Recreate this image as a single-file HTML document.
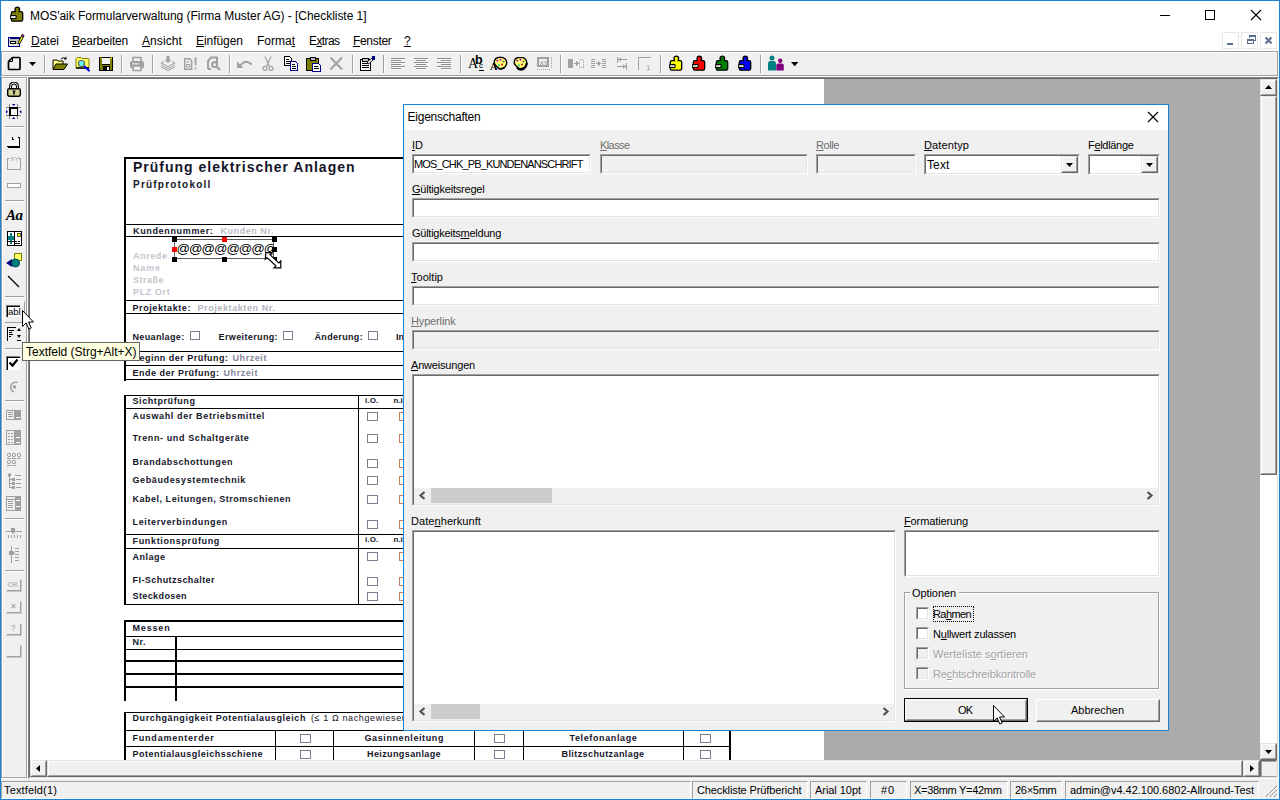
<!DOCTYPE html>
<html lang="de">
<head>
<meta charset="utf-8">
<title>MOS'aik Formularverwaltung</title>
<style>
*{box-sizing:border-box;margin:0;padding:0}
html,body{width:1280px;height:800px;overflow:hidden;background:#fff}
body{position:relative;font-family:"Liberation Sans",sans-serif;font-size:12px;color:#000}
.a{position:absolute}
.t{position:absolute;white-space:nowrap;line-height:1}
u{text-decoration:underline;text-underline-offset:1px}
#win{left:0;top:0;width:1280px;height:800px;border:1px solid #1883d7;background:#fff}
/* title */
/* menu */
/* toolbar */
#tb{left:1px;top:51px;width:1278px;height:26px;background:#f0f0f0;border-top:1px solid #d9d9d9}
.sep{position:absolute;top:57px;width:2px;height:18px;border-left:1px solid #a0a0a0;border-right:1px solid #fff}
/* left toolbar */
#ltb{left:1px;top:77px;width:27px;height:702px;background:#f0f0f0}
.hsep{position:absolute;left:5px;width:19px;height:2px;border-top:1px solid #a0a0a0;border-bottom:1px solid #fff}
/* mdi */
#mdi{left:28px;top:77px;width:1251px;height:702px;background:#ababab;border:1px solid #828282;border-right-color:#fff;border-bottom-color:#fff}
#mdi2{left:0;top:0;width:1249px;height:700px;border:1px solid #696969;border-right-color:#e3e3e3;border-bottom-color:#e3e3e3}
#page{left:30px;top:79px;width:794px;height:681px;background:#fff;overflow:hidden}
/* scrollbars */
.sb{background:#f0f0f0}
/* status */
#status{left:1px;top:779px;width:1278px;height:20px;background:#f0f0f0}
.sp{position:absolute;top:780px;height:18px;border:1px solid #a0a0a0;border-right-color:#fff;border-bottom-color:#fff}
.st{top:783px;font-size:12px}
/* dialog */
#dlg{left:403px;top:104px;width:766px;height:627px;border:1px solid #1883d7;background:#f0f0f0}
#dlgt{left:0;top:0;width:764px;height:25px;background:#fff}
.lb{font-size:11px}
.dis{color:#6d6d6d}
.in{position:absolute;background:#fff;border:1px solid #a0a0a0;border-right-color:#fff;border-bottom-color:#fff}
.in>i{position:absolute;left:0;top:0;right:0;bottom:0;border:1px solid #696969;border-right-color:#e3e3e3;border-bottom-color:#e3e3e3}
.in.d{background:#f0f0f0}
.btn{position:absolute;background:#e1e1e1;border:1px solid #adadad;font-size:11px;text-align:center}
.cb{position:absolute;width:13px;height:13px;background:#fff;border:1px solid #a0a0a0;border-right-color:#fff;border-bottom-color:#fff}
.cb>i{position:absolute;left:0;top:0;right:0;bottom:0;border:1px solid #696969;border-right-color:#e3e3e3;border-bottom-color:#e3e3e3}
/* doc */
.dt{position:absolute;white-space:nowrap;line-height:1;font-size:8.5px;font-weight:bold;color:#1a1a2a}
.dg{color:#b9b9c0}
.ln{position:absolute;background:#000}
.dcb{position:absolute;width:10px;height:9px;border:1px solid #8a8a9a;background:#fff}
</style>
</head>
<body>
<div id="win" class="a"></div>

<div class="t" style="left:30px;top:10.05px;font-size:12px;letter-spacing:-0.042px;">MOS'aik Formularverwaltung (Firma Muster AG) - [Checkliste 1]</div>
<svg class="a" style="left:1140px;top:1px;" width="139" height="29" viewBox="0 0 139 29"><g stroke="#000" stroke-width="1" fill="none" shape-rendering="crispEdges"><path d="M20 14.5h10"/><rect x="65.500" y="9.500" width="9" height="9"/></g>
<path d="M111 9l10 10M121 9l-10 10" stroke="#000" stroke-width="1.100" fill="none"/></svg>
<svg class="a" style="left:8px;top:33px;" width="17" height="15" viewBox="0 0 17 15"><g shape-rendering="crispEdges"><rect x="0" y="4" width="12" height="10" fill="#000080"/><rect x="1" y="6" width="10" height="7" fill="#c0c0c0"/><rect x="1" y="11" width="10" height="2" fill="#e8e8e8"/><rect x="1" y="5" width="1" height="1" fill="#fff"/><rect x="2" y="8" width="6" height="3" fill="#000"/><rect x="3" y="9" width="4" height="1" fill="#fff"/></g>
<path d="M10.300 9.500l3.200-6.500 1.800 1-3.200 6.300-2.200.6z" fill="#ffff00" stroke="#000" stroke-width=".9"/><path d="M13.500 3l.8-1.700 1.900 1-.9 1.700z" fill="#a000a0" stroke="#000" stroke-width=".6"/></svg>
<div class="t" style="left:31px;top:35.05px;font-size:12px;letter-spacing:-0.006px;"><u>D</u>atei</div>
<div class="t" style="left:72px;top:35.05px;font-size:12px;letter-spacing:-0.206px;"><u>B</u>earbeiten</div>
<div class="t" style="left:142px;top:35.05px;font-size:12px;letter-spacing:0.089px;"><u>A</u>nsicht</div>
<div class="t" style="left:196px;top:35.05px;font-size:12px;letter-spacing:-0.049px;"><u>E</u>infügen</div>
<div class="t" style="left:257px;top:35.05px;font-size:12px;">Forma<u>t</u></div>
<div class="t" style="left:309px;top:35.05px;font-size:12px;letter-spacing:-0.589px;">E<u>x</u>tras</div>
<div class="t" style="left:353px;top:35.05px;font-size:12px;letter-spacing:-0.315px;"><u>F</u>enster</div>
<div class="t" style="left:404px;top:35.05px;font-size:12px;"><u>?</u></div>
<div class="a" style="left:1222px;top:32px;width:17px;height:17px;background:#fff;border:1px solid #e8e8e8;"></div>
<div class="a" style="left:1241px;top:32px;width:17px;height:17px;background:#fff;border:1px solid #e8e8e8;"></div>
<div class="a" style="left:1260px;top:32px;width:17px;height:17px;background:#fff;border:1px solid #e8e8e8;"></div>
<svg class="a" style="left:1222px;top:32px;" width="55" height="17" viewBox="0 0 55 17"><g fill="none" stroke="#5c6f8c" shape-rendering="crispEdges"><path d="M5 12h6" stroke-width="2"/>
<path d="M27.500 6v-2.500h6v5h-2" stroke-width="1"/><path d="M27 3.500h7" stroke-width="2"/><rect x="25.500" y="7.500" width="6" height="4" stroke-width="1"/><path d="M25 7.500h7" stroke-width="2"/></g>
<path d="M43.500 5.500l6 6M49.500 5.500l-6 6" stroke="#5c6f8c" stroke-width="2" fill="none"/></svg>
<svg class="a" style="left:10px;top:6px;" width="14" height="16" viewBox="0 0 14 16"><rect x="1.300" y="5.600" width="11.400" height="9.600" rx="1.600" fill="#808000" stroke="#000" stroke-width="1.300"/><circle cx="7.300" cy="3.400" r="2.300" fill="#808000" stroke="#000" stroke-width="1.300"/><rect x="6" y="4.300" width="2.600" height="2.600" fill="#808000"/>
<rect x=".7" y="9.700" width="3.500" height="2.800" fill="#fff" stroke="#000" stroke-width="1.100"/><circle cx="4.600" cy="11.100" r="1.700" fill="#fff" stroke="#000" stroke-width="1.100"/><rect x="1.300" y="10.300" width="3" height="1.600" fill="#fff"/></svg>

<!-- TOOLBAR -->
<div id="tb" class="a"></div>
<div class="a" style="left:1px;top:51px;width:1277px;height:1px;background:#a0a0a0;"></div>
<div class="a" style="left:2px;top:52px;width:1275px;height:1px;background:#fff;"></div>
<div class="a" style="left:1px;top:51px;width:1px;height:25px;background:#a0a0a0;"></div>
<div class="a" style="left:2px;top:52px;width:1px;height:23px;background:#fff;"></div>
<div class="a" style="left:1px;top:75px;width:1277px;height:1px;background:#a0a0a0;"></div>
<div class="a" style="left:1px;top:76px;width:1278px;height:1px;background:#fff;"></div>
<div class="a" style="left:1277px;top:51px;width:1px;height:25px;background:#a0a0a0;"></div>
<div class="a" style="left:1278px;top:51px;width:1px;height:26px;background:#fff;"></div>
<div class="a" style="left:44px;top:55px;width:1px;height:18px;background:#a0a0a0;"></div>
<div class="a" style="left:45px;top:55px;width:1px;height:18px;background:#fff;"></div>
<div class="a" style="left:121px;top:55px;width:1px;height:18px;background:#a0a0a0;"></div>
<div class="a" style="left:122px;top:55px;width:1px;height:18px;background:#fff;"></div>
<div class="a" style="left:152px;top:55px;width:1px;height:18px;background:#a0a0a0;"></div>
<div class="a" style="left:153px;top:55px;width:1px;height:18px;background:#fff;"></div>
<div class="a" style="left:229px;top:55px;width:1px;height:18px;background:#a0a0a0;"></div>
<div class="a" style="left:230px;top:55px;width:1px;height:18px;background:#fff;"></div>
<div class="a" style="left:352px;top:55px;width:1px;height:18px;background:#a0a0a0;"></div>
<div class="a" style="left:353px;top:55px;width:1px;height:18px;background:#fff;"></div>
<div class="a" style="left:383px;top:55px;width:1px;height:18px;background:#a0a0a0;"></div>
<div class="a" style="left:384px;top:55px;width:1px;height:18px;background:#fff;"></div>
<div class="a" style="left:460px;top:55px;width:1px;height:18px;background:#a0a0a0;"></div>
<div class="a" style="left:461px;top:55px;width:1px;height:18px;background:#fff;"></div>
<div class="a" style="left:560px;top:55px;width:1px;height:18px;background:#a0a0a0;"></div>
<div class="a" style="left:561px;top:55px;width:1px;height:18px;background:#fff;"></div>
<div class="a" style="left:660px;top:55px;width:1px;height:18px;background:#a0a0a0;"></div>
<div class="a" style="left:661px;top:55px;width:1px;height:18px;background:#fff;"></div>
<div class="a" style="left:760px;top:55px;width:1px;height:18px;background:#a0a0a0;"></div>
<div class="a" style="left:761px;top:55px;width:1px;height:18px;background:#fff;"></div>
<svg class="a" style="left:7px;top:56px;" width="16" height="16" viewBox="0 0 16 16"><path d="M5.500 1.500h6.500q1 0 1 1v10q0 1-1 1h-9.500q-1 0-1-1v-7z" fill="none" stroke="#000" stroke-width="1.700"/><path d="M1.500 5.500h4v-4" fill="none" stroke="#000" stroke-width="1"/></svg>
<svg class="a" style="left:29px;top:62px;" width="8" height="5" viewBox="0 0 8 5"><path d="M0 0h7l-3.500 4z" fill="#000"/></svg>
<svg class="a" style="left:52px;top:56px;" width="16" height="16" viewBox="0 0 16 16"><path d="M1 13V4h4l1 1h5v3" fill="#ffff80" stroke="#000" stroke-width="1"/><path d="M1 13.500l3-5.500h11.500l-3.500 5.500z" fill="#808000" stroke="#000" stroke-width="1"/>
<path d="M9 3q2-2.500 5-.5" fill="none" stroke="#000" stroke-width="1"/><path d="M14.500 .5v3h-3z" fill="#000"/></svg>
<svg class="a" style="left:75px;top:56px;" width="16" height="16" viewBox="0 0 16 16"><path d="M1 12V2.500l1-1h4l1 1h6.500l.5.500V12z" fill="#ffff66" stroke="#808000" stroke-width="1"/><path d="M1 12h13" stroke="#000" stroke-width="1.500"/>
<circle cx="6.500" cy="7.500" r="3" fill="#66ffff" stroke="#606060" stroke-width="1.200"/><path d="M9 10l5.500 5" stroke="#0000ff" stroke-width="2.200"/><path d="M9.500 10.800l5 4.600" stroke="#000080" stroke-width=".7"/></svg>
<svg class="a" style="left:98px;top:56px;" width="16" height="16" viewBox="0 0 16 16"><g shape-rendering="crispEdges"><rect x="1" y="1" width="14" height="14" fill="#000"/><rect x="2" y="1" width="2" height="13" fill="#808000"/><rect x="12" y="1" width="2" height="13" fill="#808000"/><rect x="2" y="9" width="12" height="5" fill="#808000"/>
<rect x="4" y="2" width="8" height="6" fill="#f4f4f4"/><rect x="5" y="10" width="7" height="4" fill="#000"/><rect x="9" y="11" width="2" height="3" fill="#fff"/><rect x="13" y="2" width="1" height="1" fill="#ffff00"/></g></svg>
<svg class="a" style="left:129px;top:56px;" width="16" height="16" viewBox="0 0 16 16"><path d="M4 6V1.500h8V6" fill="#f0f0f0" stroke="#a0a0a0" stroke-width="1.600"/><rect x="1.500" y="5.500" width="13" height="6.500" rx="1.500" fill="#a0a0a0" stroke="#a0a0a0" stroke-width="1"/><rect x="3" y="7" width="7" height="1.500" fill="#d8d8d8"/><path d="M4 10v4.500h8V10z" fill="#f4f4f4" stroke="#a0a0a0" stroke-width="1.600"/></svg>
<svg class="a" style="left:160px;top:56px;" width="16" height="16" viewBox="0 0 16 16"><g fill="none" stroke="#a0a0a0" stroke-width="1"><path d="M1 9l7 3.500 7-3.500M1 11l7 3.500 7-3.500M1 7l7 3.500 7-3.500-3-1.500M4 5.500L1 7"/></g><path d="M6.500 0h3v3.500h2L8 7 4.500 3.500h2z" fill="#a0a0a0"/></svg>
<svg class="a" style="left:183px;top:56px;" width="16" height="16" viewBox="0 0 16 16"><g fill="none" stroke="#a0a0a0" stroke-width="1.400"><path d="M1.700 2.700h5l2 2v8.600h-7z"/><path d="M3.500 8.500h3.500v2.500h-3.500z" stroke-width="1"/><path d="M3.500 6h3" stroke-width="1"/></g><path d="M11.500 1.500h2.200l-.4 8h-1.400z" fill="#a0a0a0"/><rect x="11.700" y="11.500" width="1.800" height="1.800" fill="#a0a0a0"/></svg>
<svg class="a" style="left:206px;top:56px;" width="16" height="16" viewBox="0 0 16 16"><path d="M2 13V5l3-3.500h6V7" fill="none" stroke="#a0a0a0" stroke-width="2"/><circle cx="8.500" cy="8.500" r="2.500" fill="none" stroke="#a0a0a0" stroke-width="2"/><path d="M10.500 10.500l3.500 3.500" stroke="#a0a0a0" stroke-width="2.400"/><path d="M2 13h3" stroke="#a0a0a0" stroke-width="2"/></svg>
<svg class="a" style="left:236px;top:56px;" width="16" height="16" viewBox="0 0 16 16"><path d="M4.500 9.500Q9 2.500 16 8.500" fill="none" stroke="#a0a0a0" stroke-width="1.800"/><path d="M1 5.500v6.500h6.500z" fill="#a0a0a0"/></svg>
<svg class="a" style="left:260px;top:56px;" width="16" height="16" viewBox="0 0 16 16"><g fill="none" stroke="#a0a0a0" stroke-width="1.200"><path d="M5 0.500l4.500 10M11 0.500L6.500 10.500"/><circle cx="5" cy="12.300" r="2"/><circle cx="11" cy="12.300" r="2"/></g></svg>
<svg class="a" style="left:283px;top:56px;" width="16" height="16" viewBox="0 0 16 16"><g shape-rendering="crispEdges"><path d="M1.500 .5h5l2 2v7h-7z" fill="#fff" stroke="#000" stroke-width="1"/><path d="M3 3.500h3M3 5.500h4M3 7.500h4" stroke="#000"/>
<path d="M7.500 5.500h5l2 2v7h-7z" fill="#fff" stroke="#000080" stroke-width="1"/><path d="M9 8.500h3M9 10.500h4M9 12.500h4" stroke="#000"/></g></svg>
<svg class="a" style="left:306px;top:56px;" width="16" height="16" viewBox="0 0 16 16"><g shape-rendering="crispEdges"><rect x=".5" y="2.500" width="12" height="12" fill="#808000" stroke="#000"/><rect x="4" y="1" width="5" height="3" fill="#c0c0c0" stroke="#000"/>
<path d="M6.500 7.500h6l2 2v6h-8z" fill="#fff" stroke="#000080"/><path d="M8 10.500h4M8 12.500h5" stroke="#000"/></g></svg>
<svg class="a" style="left:328px;top:56px;" width="16" height="16" viewBox="0 0 16 16"><path d="M2.500 1.500l11.500 12M14 1.500l-11.500 12" fill="none" stroke="#a0a0a0" stroke-width="2"/></svg>
<svg class="a" style="left:359px;top:56px;" width="16" height="16" viewBox="0 0 16 16"><g shape-rendering="crispEdges"><rect x="1.500" y="3.500" width="10" height="11" fill="#fff" stroke="#000"/><path d="M3 7.500h7M3 9.500h7M3 11.500h7" stroke="#000"/><rect x="3" y="2" width="6" height="3" fill="#c0c0c0" stroke="#000"/></g>
<path d="M8 6l5-4 1.500 1.500-5 4.500z" fill="#fff" stroke="#000" stroke-width=".9"/><rect x="13" y="0" width="3.500" height="4" fill="#000080"/></svg>
<svg class="a" style="left:390px;top:56px;" width="16" height="16" viewBox="0 0 16 16"><g shape-rendering="crispEdges"><rect x="1" y="2" width="14" height="1" fill="#8c8c8c"/><rect x="2" y="3" width="14" height="1" fill="#fafafa"/><rect x="1" y="4" width="10" height="1" fill="#8c8c8c"/><rect x="2" y="5" width="10" height="1" fill="#fafafa"/><rect x="1" y="6" width="14" height="1" fill="#8c8c8c"/><rect x="2" y="7" width="14" height="1" fill="#fafafa"/><rect x="1" y="8" width="10" height="1" fill="#8c8c8c"/><rect x="2" y="9" width="10" height="1" fill="#fafafa"/><rect x="1" y="10" width="14" height="1" fill="#8c8c8c"/><rect x="2" y="11" width="14" height="1" fill="#fafafa"/><rect x="1" y="12" width="10" height="1" fill="#8c8c8c"/><rect x="2" y="13" width="10" height="1" fill="#fafafa"/></g></svg>
<svg class="a" style="left:413px;top:56px;" width="16" height="16" viewBox="0 0 16 16"><g shape-rendering="crispEdges"><rect x="1.0" y="2" width="14" height="1" fill="#8c8c8c"/><rect x="2.0" y="3" width="14" height="1" fill="#fafafa"/><rect x="3.0" y="4" width="10" height="1" fill="#8c8c8c"/><rect x="4.0" y="5" width="10" height="1" fill="#fafafa"/><rect x="1.0" y="6" width="14" height="1" fill="#8c8c8c"/><rect x="2.0" y="7" width="14" height="1" fill="#fafafa"/><rect x="3.0" y="8" width="10" height="1" fill="#8c8c8c"/><rect x="4.0" y="9" width="10" height="1" fill="#fafafa"/><rect x="1.0" y="10" width="14" height="1" fill="#8c8c8c"/><rect x="2.0" y="11" width="14" height="1" fill="#fafafa"/><rect x="3.0" y="12" width="10" height="1" fill="#8c8c8c"/><rect x="4.0" y="13" width="10" height="1" fill="#fafafa"/></g></svg>
<svg class="a" style="left:436px;top:56px;" width="16" height="16" viewBox="0 0 16 16"><g shape-rendering="crispEdges"><rect x="1" y="2" width="14" height="1" fill="#8c8c8c"/><rect x="2" y="3" width="14" height="1" fill="#fafafa"/><rect x="5" y="4" width="10" height="1" fill="#8c8c8c"/><rect x="6" y="5" width="10" height="1" fill="#fafafa"/><rect x="1" y="6" width="14" height="1" fill="#8c8c8c"/><rect x="2" y="7" width="14" height="1" fill="#fafafa"/><rect x="5" y="8" width="10" height="1" fill="#8c8c8c"/><rect x="6" y="9" width="10" height="1" fill="#fafafa"/><rect x="1" y="10" width="14" height="1" fill="#8c8c8c"/><rect x="2" y="11" width="14" height="1" fill="#fafafa"/><rect x="5" y="12" width="10" height="1" fill="#8c8c8c"/><rect x="6" y="13" width="10" height="1" fill="#fafafa"/></g></svg>
<div class="t" style="left:468px;top:57px;font-family:'Liberation Serif',serif;font-size:14px">A</div>
<div class="t" style="left:475px;top:54px;font-size:12.500px;font-weight:bold">b</div>
<div class="t" style="left:479px;top:62px;font-size:8px">c</div>
<div class="a" style="left:479px;top:70px;width:5px;height:1px;background:#000;"></div>
<svg class="a" style="left:493px;top:56px;" width="15" height="15" viewBox="0 0 15 15"><path d="M7.500 1.200C3.500 1.200 1.200 3.500 1.200 6.500c0 2.500 2 3 3 4.500s2.500 2 4.500 1.500c3-.8 5-3 5-6s-2.500-5.300-6.200-5.300z" fill="#ffff70" stroke="#000" stroke-width="1.400"/>
<circle cx="4.300" cy="4.700" r="1" fill="#c000c0"/><circle cx="7.500" cy="3.800" r="1" fill="#c000c0"/><circle cx="10.500" cy="5.500" r="1" fill="#606060"/><circle cx="6" cy="9.300" r="1" fill="#00c0c0"/><circle cx="9" cy="8.500" r="1" fill="#e00000"/><path d="M5.500 12.500q3 1.500 6.500-1" fill="none" stroke="#000" stroke-width="1.300"/></svg>
<div class="t" style="left:490px;top:62px;font-family:'Liberation Serif',serif;font-size:10.500px;font-weight:bold">A</div>
<svg class="a" style="left:513px;top:56px;" width="16" height="15" viewBox="0 0 16 15"><path d="M7.500 1.200C3.500 1.200 1.200 3.500 1.200 6.500c0 2.500 2 3 3 4.500s2.500 2 4.500 1.500c3-.8 5-3 5-6s-2.500-5.300-6.200-5.300z" fill="#ffff70" stroke="#000" stroke-width="1.400"/>
<circle cx="4.300" cy="4.700" r="1" fill="#c000c0"/><circle cx="7.500" cy="3.800" r="1" fill="#c000c0"/><circle cx="10.500" cy="5.500" r="1" fill="#606060"/><circle cx="6" cy="9.300" r="1" fill="#00c0c0"/><circle cx="9" cy="8.500" r="1" fill="#e00000"/><path d="M4 11.500q1.500 2.500 5 2t5-6.500" fill="none" stroke="#000" stroke-width="2.200"/></svg>
<svg class="a" style="left:536px;top:56px;" width="17" height="16" viewBox="0 0 17 16"><g fill="none" stroke="#a0a0a0" shape-rendering="crispEdges"><rect x="2" y="2" width="10" height="8" stroke-width="2"/><path d="M15.500 1v12M1 13.500h14" stroke-dasharray="1 1"/></g><text x="3.700" y="8.800" font-family="Liberation Sans,sans-serif" font-size="6" font-weight="bold" fill="#a0a0a0">XY</text></svg>
<svg class="a" style="left:566px;top:56px;" width="19" height="16" viewBox="0 0 19 16"><g shape-rendering="crispEdges"><rect x="2" y="3" width="5" height="9" fill="#a0a0a0"/><path d="M8 7.500h3" stroke="#a0a0a0"/><path d="M10 5v5l3-2.500z" fill="#a0a0a0"/><rect x="13.500" y="3.500" width="4" height="8" fill="none" stroke="#a0a0a0" stroke-dasharray="1 1"/></g></svg>
<svg class="a" style="left:590px;top:56px;" width="17" height="16" viewBox="0 0 17 16"><g shape-rendering="crispEdges"><path d="M1 3.500h4M1 5.500h4M1 7.500h4M1 9.500h4M1 11.500h4M12 3.500h4M12 5.500h4M12 7.500h4M12 9.500h4M12 11.500h4" stroke="#a0a0a0"/><path d="M6 7.500h3" stroke="#a0a0a0"/><path d="M8 5v5l3-2.500z" fill="#a0a0a0"/></g></svg>
<svg class="a" style="left:613px;top:56px;" width="16" height="16" viewBox="0 0 16 16"><g shape-rendering="crispEdges" stroke="#a0a0a0" fill="none"><path d="M4.500 1v6M5 3.500h9M13.500 7v7M4 10.500h9"/></g><path d="M5 3.500l3-2.300v4.600zM13 10.500l-3-2.300v4.600z" fill="#a0a0a0"/></svg>
<svg class="a" style="left:637px;top:56px;" width="16" height="16" viewBox="0 0 16 16"><g shape-rendering="crispEdges" stroke="#a0a0a0" fill="none"><path d="M1.500 14V1.500h12.500"/></g><text x="9" y="13.500" font-family="Liberation Sans,sans-serif" font-size="8" fill="#a0a0a0">1</text></svg>
<svg class="a" style="left:669px;top:55px;" width="14" height="16" viewBox="0 0 14 16"><rect x="1.300" y="5.600" width="11.400" height="9.600" rx="1.600" fill="#ffff00" stroke="#000" stroke-width="1.300"/><circle cx="7.300" cy="3.400" r="2.300" fill="#ffff00" stroke="#000" stroke-width="1.300"/><rect x="6" y="4.300" width="2.600" height="2.600" fill="#ffff00"/>
<rect x=".7" y="9.700" width="3.500" height="2.800" fill="#e4e4e4" stroke="#000" stroke-width="1.100"/><circle cx="4.600" cy="11.100" r="1.700" fill="#e4e4e4" stroke="#000" stroke-width="1.100"/><rect x="1.300" y="10.300" width="3" height="1.600" fill="#e4e4e4"/></svg>
<svg class="a" style="left:692px;top:55px;" width="14" height="16" viewBox="0 0 14 16"><rect x="1.300" y="5.600" width="11.400" height="9.600" rx="1.600" fill="#ff0000" stroke="#000" stroke-width="1.300"/><circle cx="7.300" cy="3.400" r="2.300" fill="#ff0000" stroke="#000" stroke-width="1.300"/><rect x="6" y="4.300" width="2.600" height="2.600" fill="#ff0000"/>
<rect x=".7" y="9.700" width="3.500" height="2.800" fill="#e4e4e4" stroke="#000" stroke-width="1.100"/><circle cx="4.600" cy="11.100" r="1.700" fill="#e4e4e4" stroke="#000" stroke-width="1.100"/><rect x="1.300" y="10.300" width="3" height="1.600" fill="#e4e4e4"/></svg>
<svg class="a" style="left:715px;top:55px;" width="14" height="16" viewBox="0 0 14 16"><rect x="1.300" y="5.600" width="11.400" height="9.600" rx="1.600" fill="#008000" stroke="#000" stroke-width="1.300"/><circle cx="7.300" cy="3.400" r="2.300" fill="#008000" stroke="#000" stroke-width="1.300"/><rect x="6" y="4.300" width="2.600" height="2.600" fill="#008000"/>
<rect x=".7" y="9.700" width="3.500" height="2.800" fill="#e4e4e4" stroke="#000" stroke-width="1.100"/><circle cx="4.600" cy="11.100" r="1.700" fill="#e4e4e4" stroke="#000" stroke-width="1.100"/><rect x="1.300" y="10.300" width="3" height="1.600" fill="#e4e4e4"/></svg>
<svg class="a" style="left:738px;top:55px;" width="14" height="16" viewBox="0 0 14 16"><rect x="1.300" y="5.600" width="11.400" height="9.600" rx="1.600" fill="#0000ff" stroke="#000" stroke-width="1.300"/><circle cx="7.300" cy="3.400" r="2.300" fill="#0000ff" stroke="#000" stroke-width="1.300"/><rect x="6" y="4.300" width="2.600" height="2.600" fill="#0000ff"/>
<rect x=".7" y="9.700" width="3.500" height="2.800" fill="#e4e4e4" stroke="#000" stroke-width="1.100"/><circle cx="4.600" cy="11.100" r="1.700" fill="#e4e4e4" stroke="#000" stroke-width="1.100"/><rect x="1.300" y="10.300" width="3" height="1.600" fill="#e4e4e4"/></svg>
<svg class="a" style="left:767px;top:55px;" width="18" height="16" viewBox="0 0 18 16"><circle cx="5" cy="3" r="2.500" fill="#008080"/><path d="M1 15.500V8.500q0-2.500 2-2.500h4q2 0 2 2.500v7z" fill="#008080"/><circle cx="13.200" cy="5.700" r="2.200" fill="#800080"/><path d="M9.300 15.500V10.500q0-2 2-2h3.500q2 0 2 2v5z" fill="#800080"/></svg>
<svg class="a" style="left:791px;top:62px;" width="8" height="5" viewBox="0 0 8 5"><path d="M0 0h7.400l-3.700 4.300z" fill="#000"/></svg>

<!-- LEFT TOOLBAR -->
<div id="ltb" class="a"></div>
<div class="a" style="left:1px;top:77px;width:26px;height:1px;background:#a0a0a0;"></div>
<div class="a" style="left:2px;top:78px;width:24px;height:1px;background:#fff;"></div>
<div class="a" style="left:1px;top:77px;width:1px;height:701px;background:#a0a0a0;"></div>
<div class="a" style="left:2px;top:78px;width:1px;height:699px;background:#fff;"></div>
<div class="a" style="left:26px;top:77px;width:1px;height:701px;background:#a0a0a0;"></div>
<div class="a" style="left:27px;top:77px;width:1px;height:702px;background:#fff;"></div>
<div class="a" style="left:1px;top:777px;width:26px;height:1px;background:#a0a0a0;"></div>
<div class="a" style="left:1px;top:778px;width:27px;height:1px;background:#fff;"></div>
<div class="a" style="left:5px;top:126px;width:19px;height:1px;background:#a0a0a0;"></div>
<div class="a" style="left:5px;top:127px;width:19px;height:1px;background:#fff;"></div>
<div class="a" style="left:5px;top:200px;width:19px;height:1px;background:#a0a0a0;"></div>
<div class="a" style="left:5px;top:201px;width:19px;height:1px;background:#fff;"></div>
<div class="a" style="left:5px;top:296px;width:19px;height:1px;background:#a0a0a0;"></div>
<div class="a" style="left:5px;top:297px;width:19px;height:1px;background:#fff;"></div>
<div class="a" style="left:5px;top:348px;width:19px;height:1px;background:#a0a0a0;"></div>
<div class="a" style="left:5px;top:349px;width:19px;height:1px;background:#fff;"></div>
<div class="a" style="left:5px;top:400px;width:19px;height:1px;background:#a0a0a0;"></div>
<div class="a" style="left:5px;top:401px;width:19px;height:1px;background:#fff;"></div>
<div class="a" style="left:5px;top:518px;width:19px;height:1px;background:#a0a0a0;"></div>
<div class="a" style="left:5px;top:519px;width:19px;height:1px;background:#fff;"></div>
<div class="a" style="left:5px;top:570px;width:19px;height:1px;background:#a0a0a0;"></div>
<div class="a" style="left:5px;top:571px;width:19px;height:1px;background:#fff;"></div>
<svg class="a" style="left:7px;top:82px;" width="14" height="15" viewBox="0 0 14 15"><path d="M3.500 7.500V4.500q0-3.500 3.500-3.500t3.500 3.500v3" fill="none" stroke="#000" stroke-width="3"/><path d="M3.500 8V4.500q0-3.500 3.500-3.500t3.500 3.500v3.500" fill="none" stroke="#f4f4f4" stroke-width="1"/>
<rect x=".7" y="6.700" width="12.600" height="7.600" rx="1.500" fill="#d2d296" stroke="#000" stroke-width="1.400"/><rect x="6.200" y="9" width="1.600" height="3.500" fill="#000"/><rect x="5.500" y="8.500" width="3" height="1" fill="#000"/></svg>
<svg class="a" style="left:6px;top:104px;" width="16" height="16" viewBox="0 0 16 16"><g shape-rendering="crispEdges"><path d="M3.500 0v15M11.500 0v15M0 3.500h15M0 11.500h15" stroke="#808080"/><rect x="3.500" y="3.500" width="8" height="8" fill="#f6f6f6" stroke="#000" stroke-width="1"/><rect x="4" y="4" width="7" height="7" fill="none" stroke="#000" stroke-width="1"/></g>
<path d="M6 0h3.400l-1.700 2zM6 15h3.400l-1.700-2zM0 6v3.400l2-1.700zM15.400 6v3.400l-2-1.700z" fill="#0000a0"/></svg>
<svg class="a" style="left:6px;top:137px;" width="15" height="11" viewBox="0 0 15 11"><g shape-rendering="crispEdges"><rect x="1" y="1" width="12" height="9" fill="#f8f8f8"/><path d="M1 9.500h13M13.500 0v10" stroke="#000"/><path d="M2 10.500h12" stroke="#000"/><path d="M6.500 0v3M6 2.500h2M12 .5h2" stroke="#000"/></g></svg>
<svg class="a" style="left:6px;top:155px;" width="16" height="16" viewBox="0 0 16 16"><g shape-rendering="crispEdges"><path d="M4 3.500H1.500v11h13v-11H12" fill="none" stroke="#a0a0a0"/></g><text x="4.500" y="6" font-family="Liberation Sans,sans-serif" font-size="6" fill="#a0a0a0">XY</text></svg>
<svg class="a" style="left:6px;top:182px;" width="16" height="7" viewBox="0 0 16 7"><g shape-rendering="crispEdges"><rect x="1.500" y="1.500" width="13" height="4" fill="#fff" stroke="#a0a0a0"/></g></svg>
<div class="t" style="left:6px;top:208px;font-family:'Liberation Serif',serif;font-size:15px;font-weight:bold;font-style:italic;letter-spacing:-.5px">Aa</div>
<svg class="a" style="left:6px;top:230px;" width="17" height="17" viewBox="0 0 17 17"><g shape-rendering="crispEdges"><rect x="1" y="1" width="15" height="15" fill="#000"/><rect x="2" y="2" width="13" height="13" fill="#fff"/><rect x="4" y="3" width="2" height="11" fill="#008080"/><rect x="2" y="6" width="6" height="4" fill="#008080"/><rect x="2" y="11" width="6" height="1" fill="#000"/>
<rect x="11" y="3" width="3" height="3" fill="#ffff00" stroke="#000" stroke-width=".6"/><rect x="8" y="9" width="7" height="6" fill="#fff"/><path d="M9 11.500h2M12 11.500h2M9 13.500h5" stroke="#000"/><path d="M8.500 2v13" stroke="#000"/></g></svg>
<svg class="a" style="left:6px;top:252px;" width="17" height="16" viewBox="0 0 17 16"><rect x="8.500" y="1.500" width="7" height="7" fill="#ffff66" stroke="#808000"/><path d="M0 11l6-4v8z" fill="#000080"/><circle cx="9.500" cy="11" r="4" fill="#008080" stroke="#004040"/></svg>
<svg class="a" style="left:6px;top:275px;" width="16" height="14" viewBox="0 0 16 14"><path d="M2 1l11 11" stroke="#000" stroke-width="1.200"/></svg>
<div class="a" style="left:4px;top:301px;width:21px;height:22px;background:#f0f0f0;border:1px solid #fff;border-right-color:#a0a0a0;border-bottom-color:#a0a0a0;"></div>
<svg class="a" style="left:6px;top:305px;" width="15" height="13" viewBox="0 0 15 13"><g shape-rendering="crispEdges"><rect x="1" y="1" width="13" height="11" fill="#fff"/><path d="M.5 12V.5h13.500" fill="none" stroke="#808080"/><path d="M1.500 12V1.500h12.500" fill="none" stroke="#000"/></g><text x="2" y="10" font-family="Liberation Sans,sans-serif" font-size="9.500" fill="#000">abl</text></svg>
<svg class="a" style="left:6px;top:326px;" width="16" height="16" viewBox="0 0 16 16"><g shape-rendering="crispEdges"><path d="M1.500 15V1.500h8" fill="none" stroke="#000" stroke-width="1"/><path d="M3 4.500h5M3 6.500h3M3 8.500h4M3 10.500h2" stroke="#000"/><path d="M11 14.500h4" stroke="#000"/></g><path d="M13 2l2 3h-4zM13 12l2-3h-4z" fill="#000"/></svg>
<svg class="a" style="left:6px;top:356px;" width="16" height="16" viewBox="0 0 16 16"><g shape-rendering="crispEdges"><rect x="1" y="1" width="13" height="13" fill="#fff"/><path d="M1.500 14V1.500h12.500" fill="none" stroke="#000" stroke-width="1"/><path d="M.5 14V.5h13.500" fill="none" stroke="#808080"/></g><path d="M3.500 6.500l3 3 5-6" fill="none" stroke="#000" stroke-width="2.200"/></svg>
<svg class="a" style="left:6px;top:379px;" width="16" height="16" viewBox="0 0 16 16"><path d="M11.500 3.500A5 5 0 1 0 8 13" fill="none" stroke="#a0a0a0" stroke-width="1.500"/><circle cx="8.500" cy="8" r="1.800" fill="#a0a0a0"/></svg>
<svg class="a" style="left:5px;top:409px;" width="17" height="12" viewBox="0 0 17 12"><g shape-rendering="crispEdges"><rect x="1.500" y="1.500" width="8" height="9" fill="none" stroke="#a0a0a0"/><path d="M3 3.5h5" stroke="#a0a0a0"/><path d="M3 5.5h5" stroke="#a0a0a0"/><path d="M3 7.5h5" stroke="#a0a0a0"/><rect x="10" y="1" width="6" height="10" fill="#a0a0a0"/><path d="M11 8.500h4" stroke="#fff"/></g></svg>
<svg class="a" style="left:5px;top:429px;" width="17" height="17" viewBox="0 0 17 17"><g shape-rendering="crispEdges"><rect x="1.500" y="1.500" width="8" height="14" fill="none" stroke="#a0a0a0"/><path d="M3 4.500h2M3 7.500h2M3 10.500h2M3 13.500h2M6 4.500h2M6 7.500h2M6 10.500h2M6 13.500h2" stroke="#a0a0a0"/><rect x="10" y="1" width="6" height="15" fill="#a0a0a0"/><path d="M11 8.500h4M11 13.500h4" stroke="#fff"/></g></svg>
<svg class="a" style="left:6px;top:452px;" width="16" height="16" viewBox="0 0 16 16"><g fill="none" stroke="#a0a0a0" stroke-width="1"><circle cx="3" cy="3" r="1.700"/><circle cx="8" cy="3" r="1.700"/><circle cx="13" cy="3" r="1.700"/><circle cx="3" cy="10" r="1.700"/><circle cx="8" cy="10" r="1.700"/><path d="M1 6.500h4M6 6.500h4M11 6.500h4M1 13.500h4M6 13.500h4"/></g></svg>
<svg class="a" style="left:6px;top:473px;" width="16" height="17" viewBox="0 0 16 17"><g shape-rendering="crispEdges" stroke="#a0a0a0" fill="none"><path d="M3.500 3v12M3.500 6.500h3M3.500 10.500h3M3.500 14.500h3M9 2.500h6M10 6.500h5M10 10.500h5M10 14.500h5"/></g><g fill="#a0a0a0"><circle cx="3.500" cy="2" r="1.800"/><rect x="6" y="5" width="3" height="3"/><rect x="6" y="9" width="3" height="3"/><rect x="6" y="13" width="3" height="3"/></g></svg>
<svg class="a" style="left:5px;top:495px;" width="17" height="17" viewBox="0 0 17 17"><g shape-rendering="crispEdges"><rect x="1.500" y="1.500" width="14" height="14" fill="none" stroke="#a0a0a0"/><path d="M1 4.500h9" stroke="#a0a0a0"/><path d="M3 6.5h5" stroke="#a0a0a0"/><path d="M3 8.5h5" stroke="#a0a0a0"/><path d="M3 10.5h5" stroke="#a0a0a0"/><path d="M3 12.5h5" stroke="#a0a0a0"/><rect x="10" y="1" width="6" height="15" fill="#a0a0a0"/><path d="M11 5.500h4M11 11.500h4" stroke="#fff"/></g></svg>
<svg class="a" style="left:6px;top:527px;" width="16" height="12" viewBox="0 0 16 12"><g shape-rendering="crispEdges" stroke="#a0a0a0"><path d="M0 4.500h16"/><path d="M2.500 8v3M5.500 8v3M8.500 8v3M11.500 8v3M14.500 8v3"/></g><path d="M5 1h4v4l-2 2-2-2z" fill="#a0a0a0"/></svg>
<svg class="a" style="left:6px;top:546px;" width="16" height="18" viewBox="0 0 16 18"><g shape-rendering="crispEdges" stroke="#a0a0a0"><path d="M5.500 0v17"/><path d="M9 2.500h4M9 5.500h4M9 8.500h4M9 11.500h4M9 14.500h4"/></g><path d="M3 5h4l2 2-2 2H3z" fill="#a0a0a0"/></svg>
<svg class="a" style="left:6px;top:579px;" width="16" height="13" viewBox="0 0 16 13"><g shape-rendering="crispEdges" fill="none" stroke="#a0a0a0" stroke-width="1"><path d="M14.500 1v10.500H1"/><path d="M15.500 0v12.500H0" stroke="#c8c8c8"/></g><text x="7" y="8" text-anchor="middle" font-family="Liberation Sans,sans-serif" font-size="7.5" fill="#a0a0a0">OK</text></svg>
<svg class="a" style="left:6px;top:601px;" width="16" height="13" viewBox="0 0 16 13"><g shape-rendering="crispEdges" fill="none" stroke="#a0a0a0" stroke-width="1"><path d="M14.500 1v10.500H1"/><path d="M15.500 0v12.500H0" stroke="#c8c8c8"/></g><text x="7" y="8" text-anchor="middle" font-family="Liberation Sans,sans-serif" font-size="8" fill="#a0a0a0">✕</text></svg>
<svg class="a" style="left:6px;top:623px;" width="16" height="13" viewBox="0 0 16 13"><g shape-rendering="crispEdges" fill="none" stroke="#a0a0a0" stroke-width="1"><path d="M14.500 1v10.500H1"/><path d="M15.500 0v12.500H0" stroke="#c8c8c8"/></g><text x="7" y="8" text-anchor="middle" font-family="Liberation Sans,sans-serif" font-size="8.5" fill="#a0a0a0">?</text></svg>
<svg class="a" style="left:6px;top:645px;" width="16" height="13" viewBox="0 0 16 13"><g shape-rendering="crispEdges" fill="none" stroke="#a0a0a0" stroke-width="1"><path d="M14.500 1v10.500H1"/><path d="M15.500 0v12.500H0" stroke="#c8c8c8"/></g></svg>

<!-- MDI CLIENT -->
<div id="mdi" class="a"><div id="mdi2" class="a"></div></div>
<div id="page" class="a">
<div class="a" style="left:94px;top:78px;width:700px;height:2px;background:#000;"></div>
<div class="a" style="left:94px;top:78px;width:2px;height:224px;background:#000;"></div>
<div class="a" style="left:94px;top:145px;width:700px;height:1px;background:#000;"></div>
<div class="a" style="left:94px;top:157px;width:700px;height:1px;background:#000;"></div>
<div class="a" style="left:94px;top:221px;width:700px;height:1px;background:#000;"></div>
<div class="a" style="left:94px;top:234px;width:700px;height:1px;background:#000;"></div>
<div class="a" style="left:94px;top:272px;width:700px;height:1px;background:#000;"></div>
<div class="a" style="left:94px;top:286px;width:700px;height:1px;background:#000;"></div>
<div class="a" style="left:94px;top:300px;width:700px;height:1px;background:#000;"></div>
<div class="t" style="left:103px;top:81.05px;font-size:14px;color:#15152a;font-weight:700;letter-spacing:0.991px;">Prüfung elektrischer Anlagen</div>
<div class="t" style="left:103px;top:100.55px;font-size:10px;color:#15152a;font-weight:700;letter-spacing:1.209px;">Prüfprotokoll</div>
<div class="t" style="left:103px;top:147.55px;font-size:9px;color:#15152a;font-weight:700;letter-spacing:0.654px;">Kundennummer:</div>
<div class="t" style="left:190.5px;top:147.55px;font-size:9px;color:#bcbcc8;font-weight:700;letter-spacing:0.548px;">Kunden Nr.</div>
<div class="t" style="left:103px;top:172.55px;font-size:9px;color:#c4c4cc;font-weight:700;letter-spacing:0.581px;">Anrede</div>
<div class="t" style="left:103px;top:184.55px;font-size:9px;color:#c4c4cc;font-weight:700;letter-spacing:0.871px;">Name</div>
<div class="t" style="left:103px;top:196.55px;font-size:9px;color:#c4c4cc;font-weight:700;letter-spacing:0.497px;">Straße</div>
<div class="t" style="left:103px;top:208.55px;font-size:9px;color:#c4c4cc;font-weight:700;letter-spacing:0.625px;">PLZ  Ort</div>
<div class="t" style="left:102.5px;top:224.55px;font-size:9px;color:#15152a;font-weight:700;letter-spacing:0.581px;">Projektakte:</div>
<div class="t" style="left:167.5px;top:224.55px;font-size:9px;color:#b4b4c0;font-weight:700;letter-spacing:0.592px;">Projektakten Nr.</div>
<div class="t" style="left:102.5px;top:253.55px;font-size:9px;color:#15152a;font-weight:700;letter-spacing:0.348px;">Neuanlage:</div>
<div class="a" style="left:160px;top:252px;width:10px;height:9px;background:#fff;border:1px solid #7d7d92;"></div>
<div class="t" style="left:188.5px;top:253.55px;font-size:9px;color:#15152a;font-weight:700;letter-spacing:0.374px;">Erweiterung:</div>
<div class="a" style="left:253px;top:252px;width:10px;height:9px;background:#fff;border:1px solid #7d7d92;"></div>
<div class="t" style="left:284.5px;top:253.55px;font-size:9px;color:#15152a;font-weight:700;letter-spacing:0.333px;">Änderung:</div>
<div class="a" style="left:337.5px;top:252px;width:10px;height:9px;background:#fff;border:1px solid #7d7d92;"></div>
<div class="t" style="left:366px;top:253.55px;font-size:9px;color:#15152a;font-weight:700;letter-spacing:0.067px;">Instandsetzung:</div>
<div class="t" style="left:102.5px;top:274.55px;font-size:9px;color:#15152a;font-weight:700;letter-spacing:0.474px;">Beginn der Prüfung:</div>
<div class="t" style="left:202.5px;top:274.55px;font-size:9px;color:#85859a;font-weight:700;letter-spacing:0.569px;">Uhrzeit</div>
<div class="t" style="left:102.5px;top:289.55px;font-size:9px;color:#15152a;font-weight:700;letter-spacing:0.500px;">Ende der Prüfung:</div>
<div class="t" style="left:193.5px;top:289.55px;font-size:9px;color:#85859a;font-weight:700;letter-spacing:0.569px;">Uhrzeit</div>
<div class="a" style="left:94px;top:316px;width:700px;height:1px;background:#000;"></div>
<div class="a" style="left:94px;top:316px;width:2px;height:210px;background:#000;"></div>
<div class="a" style="left:94px;top:329px;width:700px;height:1px;background:#000;"></div>
<div class="a" style="left:94px;top:455px;width:700px;height:1px;background:#000;"></div>
<div class="a" style="left:94px;top:469px;width:700px;height:1px;background:#000;"></div>
<div class="a" style="left:94px;top:525px;width:700px;height:1px;background:#000;"></div>
<div class="a" style="left:328px;top:316px;width:1px;height:210px;background:#000;"></div>
<div class="t" style="left:102.5px;top:317.55px;font-size:9px;color:#15152a;font-weight:700;letter-spacing:0.583px;">Sichtprüfung</div>
<div class="t" style="left:335px;top:317.55px;font-size:8px;color:#15152a;font-weight:700;letter-spacing:0.152px;">i.O.</div>
<div class="t" style="left:363.5px;top:317.55px;font-size:8px;color:#15152a;font-weight:700;">n.i.O.</div>
<div class="t" style="left:102.5px;top:332.55px;font-size:9px;color:#15152a;font-weight:700;letter-spacing:0.633px;">Auswahl der Betriebsmittel</div>
<div class="a" style="left:337px;top:333px;width:11px;height:9px;background:#fff;border:1px solid #7d7d92;"></div>
<div class="a" style="left:369px;top:333px;width:11px;height:9px;background:#fff;border:1px solid #c08060;"></div>
<div class="t" style="left:102.5px;top:354.55px;font-size:9px;color:#15152a;font-weight:700;letter-spacing:0.607px;">Trenn- und Schaltgeräte</div>
<div class="a" style="left:337px;top:355px;width:11px;height:9px;background:#fff;border:1px solid #7d7d92;"></div>
<div class="a" style="left:369px;top:355px;width:11px;height:9px;background:#fff;border:1px solid #c08060;"></div>
<div class="t" style="left:102.5px;top:378.55px;font-size:9px;color:#15152a;font-weight:700;letter-spacing:0.555px;">Brandabschottungen</div>
<div class="a" style="left:337px;top:380px;width:11px;height:9px;background:#fff;border:1px solid #7d7d92;"></div>
<div class="a" style="left:369px;top:380px;width:11px;height:9px;background:#fff;border:1px solid #c08060;"></div>
<div class="t" style="left:102.5px;top:396.55px;font-size:9px;color:#15152a;font-weight:700;letter-spacing:0.623px;">Gebäudesystemtechnik</div>
<div class="a" style="left:337px;top:397px;width:11px;height:9px;background:#fff;border:1px solid #7d7d92;"></div>
<div class="a" style="left:369px;top:397px;width:11px;height:9px;background:#fff;border:1px solid #c08060;"></div>
<div class="t" style="left:102.5px;top:415.55px;font-size:9px;color:#15152a;font-weight:700;letter-spacing:0.515px;">Kabel, Leitungen, Stromschienen</div>
<div class="a" style="left:337px;top:415.5px;width:11px;height:9px;background:#fff;border:1px solid #7d7d92;"></div>
<div class="a" style="left:369px;top:415.5px;width:11px;height:9px;background:#fff;border:1px solid #c08060;"></div>
<div class="t" style="left:102.5px;top:438.55px;font-size:9px;color:#15152a;font-weight:700;letter-spacing:0.638px;">Leiterverbindungen</div>
<div class="a" style="left:337px;top:440.5px;width:11px;height:9px;background:#fff;border:1px solid #7d7d92;"></div>
<div class="a" style="left:369px;top:440.5px;width:11px;height:9px;background:#fff;border:1px solid #c08060;"></div>
<div class="t" style="left:102.5px;top:457.55px;font-size:9px;color:#15152a;font-weight:700;letter-spacing:0.657px;">Funktionsprüfung</div>
<div class="t" style="left:335px;top:456.55px;font-size:8px;color:#15152a;font-weight:700;letter-spacing:0.152px;">i.O.</div>
<div class="t" style="left:363.5px;top:456.55px;font-size:8px;color:#15152a;font-weight:700;">n.i.O.</div>
<div class="t" style="left:102.5px;top:473.55px;font-size:9px;color:#15152a;font-weight:700;letter-spacing:0.497px;">Anlage</div>
<div class="a" style="left:337px;top:473px;width:11px;height:9px;background:#fff;border:1px solid #7d7d92;"></div>
<div class="a" style="left:369px;top:473px;width:11px;height:9px;background:#fff;border:1px solid #c08060;"></div>
<div class="t" style="left:102.5px;top:496.55px;font-size:9px;color:#15152a;font-weight:700;letter-spacing:0.440px;">FI-Schutzschalter</div>
<div class="a" style="left:337px;top:498px;width:11px;height:9px;background:#fff;border:1px solid #7d7d92;"></div>
<div class="a" style="left:369px;top:498px;width:11px;height:9px;background:#fff;border:1px solid #c08060;"></div>
<div class="t" style="left:102.5px;top:512.55px;font-size:9px;color:#15152a;font-weight:700;letter-spacing:0.397px;">Steckdosen</div>
<div class="a" style="left:337px;top:513px;width:11px;height:9px;background:#fff;border:1px solid #7d7d92;"></div>
<div class="a" style="left:369px;top:513px;width:11px;height:9px;background:#fff;border:1px solid #c08060;"></div>
<div class="a" style="left:94px;top:541px;width:700px;height:2px;background:#000;"></div>
<div class="a" style="left:94px;top:541px;width:2px;height:81px;background:#000;"></div>
<div class="a" style="left:94px;top:557px;width:700px;height:1px;background:#000;"></div>
<div class="a" style="left:94px;top:570px;width:700px;height:1px;background:#000;"></div>
<div class="a" style="left:94px;top:581px;width:700px;height:2px;background:#000;"></div>
<div class="a" style="left:94px;top:594px;width:700px;height:2px;background:#000;"></div>
<div class="a" style="left:94px;top:607px;width:700px;height:2px;background:#000;"></div>
<div class="a" style="left:145px;top:557px;width:2px;height:65px;background:#000;"></div>
<div class="t" style="left:102.5px;top:544.55px;font-size:9px;color:#15152a;font-weight:700;letter-spacing:0.828px;">Messen</div>
<div class="t" style="left:102.5px;top:558.55px;font-size:9px;color:#15152a;font-weight:700;letter-spacing:0.495px;">Nr.</div>
<div class="a" style="left:94px;top:633px;width:606px;height:1px;background:#000;"></div>
<div class="a" style="left:94px;top:633px;width:2px;height:48px;background:#000;"></div>
<div class="a" style="left:94px;top:651px;width:606px;height:1px;background:#000;"></div>
<div class="a" style="left:94px;top:667px;width:606px;height:1px;background:#000;"></div>
<div class="a" style="left:245px;top:651px;width:1px;height:30px;background:#000;"></div>
<div class="a" style="left:303px;top:651px;width:1px;height:30px;background:#000;"></div>
<div class="a" style="left:444px;top:651px;width:1px;height:30px;background:#000;"></div>
<div class="a" style="left:493px;top:651px;width:1px;height:30px;background:#000;"></div>
<div class="a" style="left:653px;top:651px;width:1px;height:30px;background:#000;"></div>
<div class="a" style="left:699px;top:633px;width:2px;height:48px;background:#000;"></div>
<div class="t" style="left:102.5px;top:634.55px;font-size:9px;color:#15152a;font-weight:700;letter-spacing:0.602px;">Durchgängigkeit Potentialausgleich</div>
<div class="t" style="left:281px;top:634.55px;font-size:9px;color:#15152a;font-weight:400;letter-spacing:0.614px;">(≤ 1 Ω nachgewiesen)</div>
<div class="t" style="left:102.5px;top:654.55px;font-size:9px;color:#15152a;font-weight:700;letter-spacing:0.785px;">Fundamenterder</div>
<div class="t" style="left:102.5px;top:670.55px;font-size:9px;color:#15152a;font-weight:700;letter-spacing:0.479px;">Potentialausgleichsschiene</div>
<div class="a" style="left:270px;top:655px;width:11px;height:9px;background:#fff;border:1px solid #7d7d92;"></div>
<div class="a" style="left:270px;top:671px;width:11px;height:9px;background:#fff;border:1px solid #7d7d92;"></div>
<div class="t" style="left:334.5px;top:654.55px;font-size:9px;color:#15152a;font-weight:700;letter-spacing:0.599px;">Gasinnenleitung</div>
<div class="t" style="left:337px;top:670.55px;font-size:9px;color:#15152a;font-weight:700;letter-spacing:0.392px;">Heizungsanlage</div>
<div class="a" style="left:464px;top:655px;width:11px;height:9px;background:#fff;border:1px solid #7d7d92;"></div>
<div class="a" style="left:464px;top:671px;width:11px;height:9px;background:#fff;border:1px solid #7d7d92;"></div>
<div class="t" style="left:539.5px;top:654.55px;font-size:9px;color:#15152a;font-weight:700;letter-spacing:0.626px;">Telefonanlage</div>
<div class="t" style="left:531.5px;top:670.55px;font-size:9px;color:#15152a;font-weight:700;letter-spacing:0.411px;">Blitzschutzanlage</div>
<div class="a" style="left:670px;top:655px;width:11px;height:9px;background:#fff;border:1px solid #7d7d92;"></div>
<div class="a" style="left:670px;top:671px;width:11px;height:9px;background:#fff;border:1px solid #7d7d92;"></div>
<div class="a" style="left:144px;top:160px;width:100px;height:20px;border:1px solid #606060;overflow:hidden;"><div class="t" style="left:1.500px;top:1.900px;font-size:13.330px;letter-spacing:-1.060px">@@@@@@@@@</div></div>
<div class="a" style="left:142px;top:158px;width:5px;height:5px;background:#000;"></div>
<div class="a" style="left:192px;top:158px;width:5px;height:5px;background:#f00;"></div>
<div class="a" style="left:242px;top:158px;width:5px;height:5px;background:#000;"></div>
<div class="a" style="left:142px;top:168px;width:5px;height:5px;background:#f00;"></div>
<div class="a" style="left:242px;top:168px;width:5px;height:5px;background:#000;"></div>
<div class="a" style="left:142px;top:178px;width:5px;height:5px;background:#000;"></div>
<div class="a" style="left:192px;top:178px;width:5px;height:5px;background:#000;"></div>
<div class="a" style="left:242px;top:178px;width:5px;height:5px;background:#000;"></div>
</div>
<div class="a" style="left:1260px;top:79px;width:17px;height:681px;background:#fff;"></div>
<div class="a" style="left:1260px;top:79px;width:17px;height:17px;background:#f0f0f0;border:1px solid #e3e3e3;border-right-color:#696969;border-bottom-color:#696969;"><div class="a" style="left:0;top:0;width:15px;height:15px;border:1px solid #fff;border-right-color:#a0a0a0;border-bottom-color:#a0a0a0"></div></div>
<div class="a" style="left:1260px;top:743px;width:17px;height:17px;background:#f0f0f0;border:1px solid #e3e3e3;border-right-color:#696969;border-bottom-color:#696969;"><div class="a" style="left:0;top:0;width:15px;height:15px;border:1px solid #fff;border-right-color:#a0a0a0;border-bottom-color:#a0a0a0"></div></div>
<div class="a" style="left:1260px;top:96px;width:17px;height:379px;background:#f0f0f0;border:1px solid #e3e3e3;border-right-color:#696969;border-bottom-color:#696969;"><div class="a" style="left:0;top:0;width:15px;height:377px;border:1px solid #fff;border-right-color:#a0a0a0;border-bottom-color:#a0a0a0"></div></div>
<svg class="a" style="left:1265px;top:85px;" width="7" height="4" viewBox="0 0 7 4"><path d="M0 4h7L3.500 0z" fill="#000"/></svg>
<svg class="a" style="left:1265px;top:750px;" width="7" height="4" viewBox="0 0 7 4"><path d="M0 0h7L3.500 4z" fill="#000"/></svg>
<div class="a" style="left:30px;top:760px;width:1230px;height:17px;background:#f0f0f0;"></div>
<div class="a" style="left:30px;top:760px;width:17px;height:17px;background:#f0f0f0;border:1px solid #e3e3e3;border-right-color:#696969;border-bottom-color:#696969;"><div class="a" style="left:0;top:0;width:15px;height:15px;border:1px solid #fff;border-right-color:#a0a0a0;border-bottom-color:#a0a0a0"></div></div>
<div class="a" style="left:1243px;top:760px;width:17px;height:17px;background:#f0f0f0;border:1px solid #e3e3e3;border-right-color:#696969;border-bottom-color:#696969;"><div class="a" style="left:0;top:0;width:15px;height:15px;border:1px solid #fff;border-right-color:#a0a0a0;border-bottom-color:#a0a0a0"></div></div>
<div class="a" style="left:47px;top:760px;width:1196px;height:17px;background:#f0f0f0;border:1px solid #e3e3e3;border-right-color:#696969;border-bottom-color:#696969;"><div class="a" style="left:0;top:0;width:1194px;height:15px;border:1px solid #fff;border-right-color:#a0a0a0;border-bottom-color:#a0a0a0"></div></div>
<svg class="a" style="left:36px;top:765px;" width="4" height="7" viewBox="0 0 4 7"><path d="M4 0v7L0 3.500z" fill="#000"/></svg>
<svg class="a" style="left:1250px;top:765px;" width="4" height="7" viewBox="0 0 4 7"><path d="M0 0v7L4 3.500z" fill="#000"/></svg>
<div class="a" style="left:1260px;top:760px;width:17px;height:17px;background:#f0f0f0;border:1px solid #696969;border-right-color:#e3e3e3;border-bottom-color:#a0a0a0;box-shadow:inset 1px 1px 0 #a0a0a0;"></div>

<!-- STATUS BAR -->
<div id="status" class="a"></div>
<div class="a" style="left:1px;top:781px;width:690px;height:18px;border:1px solid #a0a0a0;border-right-color:#fff;border-bottom-color:#fff;"></div>
<div class="a" style="left:692px;top:781px;width:116px;height:18px;border:1px solid #a0a0a0;border-right-color:#fff;border-bottom-color:#fff;"></div>
<div class="a" style="left:810px;top:781px;width:57px;height:18px;border:1px solid #a0a0a0;border-right-color:#fff;border-bottom-color:#fff;"></div>
<div class="a" style="left:870px;top:781px;width:37px;height:18px;border:1px solid #a0a0a0;border-right-color:#fff;border-bottom-color:#fff;"></div>
<div class="a" style="left:910px;top:781px;width:98px;height:18px;border:1px solid #a0a0a0;border-right-color:#fff;border-bottom-color:#fff;"></div>
<div class="a" style="left:1010px;top:781px;width:52px;height:18px;border:1px solid #a0a0a0;border-right-color:#fff;border-bottom-color:#fff;"></div>
<div class="a" style="left:1065px;top:781px;width:194px;height:18px;border:1px solid #a0a0a0;border-right-color:#fff;border-bottom-color:#fff;"></div>
<div class="t" style="left:4px;top:784.55px;font-size:11px;letter-spacing:0.149px;">Textfeld(1)</div>
<div class="t" style="left:697px;top:784.55px;font-size:11px;letter-spacing:-0.114px;">Checkliste Prüfbericht</div>
<div class="t" style="left:815px;top:784.55px;font-size:11px;letter-spacing:-0.048px;">Arial 10pt</div>
<div class="t" style="left:881px;top:784.55px;font-size:11px;letter-spacing:0.875px;">#0</div>
<div class="t" style="left:914px;top:784.55px;font-size:11px;letter-spacing:-0.309px;">X=38mm Y=42mm</div>
<div class="t" style="left:1015px;top:784.55px;font-size:11px;letter-spacing:-0.268px;">26×5mm</div>
<div class="t" style="left:1070px;top:784.55px;font-size:11px;letter-spacing:-0.025px;">admin@v4.42.100.6802-Allround-Test</div>
<svg class="a" style="left:1264px;top:784px;" width="14" height="14" viewBox="0 0 14 14"><g stroke="#a0a0a0" stroke-width="1.200"><path d="M13 2L2 13M13 6L6 13M13 10l-3 3"/></g><g stroke="#fff" stroke-width="1"><path d="M14 2L3 13M14 6L7 13M14 10l-3 3"/></g></svg>

<!-- DIALOG -->
<div id="dlg" class="a">
<div id="dlgt" class="a"></div>
<div class="t" style="left:3.5px;top:6.05px;font-size:12px;letter-spacing:-0.236px;">Eigenschaften</div>
<svg class="a" style="left:743px;top:6px;" width="12" height="12" viewBox="0 0 12 12"><path d="M1 1l10 10M11 1L1 11" stroke="#000" stroke-width="1.100" fill="none"/></svg>
<div class="t" style="left:8px;top:34.55px;font-size:11px;letter-spacing:-0.008px;"><u>I</u>D</div>
<div class="in" style="left:8px;top:49px;width:179px;height:20px"><i></i></div>
<div class="t" style="left:10px;top:53.55px;font-size:11px;letter-spacing:-0.854px;">MOS_CHK_PB_KUNDENANSCHRIFT</div>
<div class="t" style="left:196px;top:34.55px;font-size:11px;color:#6d6d6d;letter-spacing:-0.589px;"><u>K</u>lasse</div>
<div class="in d" style="left:196px;top:49px;width:208px;height:20px"><i></i></div>
<div class="t" style="left:412px;top:34.55px;font-size:11px;color:#6d6d6d;letter-spacing:-0.416px;"><u>R</u>olle</div>
<div class="in d" style="left:412px;top:49px;width:100px;height:20px"><i></i></div>
<div class="t" style="left:520px;top:34.55px;font-size:11px;letter-spacing:0.119px;"><u>D</u>atentyp</div>
<div class="in" style="left:520px;top:49px;width:156px;height:21px"><i></i></div>
<div class="t" style="left:523px;top:54.05px;font-size:12px;letter-spacing:0.121px;">Text</div>
<div class="t" style="left:684px;top:34.55px;font-size:11px;letter-spacing:-0.316px;">F<u>e</u>ldlänge</div>
<div class="in" style="left:684px;top:49px;width:72px;height:21px"><i></i></div>
<div class="a" style="left:657px;top:51px;width:17px;height:17px;background:#f0f0f0;border:1px solid #e3e3e3;border-right-color:#696969;border-bottom-color:#696969;"><div class="a" style="left:0;top:0;width:15px;height:15px;border:1px solid #fff;border-right-color:#a0a0a0;border-bottom-color:#a0a0a0"></div><svg class="a" style="left:4px;top:6px" width="7" height="4"><path d="M0 0h7L3.500 4z" fill="#000"/></svg></div>
<div class="a" style="left:737px;top:51px;width:17px;height:17px;background:#f0f0f0;border:1px solid #e3e3e3;border-right-color:#696969;border-bottom-color:#696969;"><div class="a" style="left:0;top:0;width:15px;height:15px;border:1px solid #fff;border-right-color:#a0a0a0;border-bottom-color:#a0a0a0"></div><svg class="a" style="left:4px;top:6px" width="7" height="4"><path d="M0 0h7L3.500 4z" fill="#000"/></svg></div>
<div class="t" style="left:8px;top:78.55px;font-size:11px;letter-spacing:-0.208px;"><u>G</u>ültigkeitsregel</div>
<div class="in" style="left:8px;top:93px;width:748px;height:20px"><i></i></div>
<div class="t" style="left:8px;top:122.55px;font-size:11px;letter-spacing:-0.254px;">Gültigkeits<u>m</u>eldung</div>
<div class="in" style="left:8px;top:137px;width:748px;height:20px"><i></i></div>
<div class="t" style="left:7px;top:166.55px;font-size:11px;letter-spacing:0.029px;"><u>T</u>ooltip</div>
<div class="in" style="left:8px;top:181px;width:748px;height:20px"><i></i></div>
<div class="t" style="left:7px;top:210.55px;font-size:11px;color:#6d6d6d;letter-spacing:-0.151px;"><u>H</u>yperlink</div>
<div class="in d" style="left:8px;top:225px;width:748px;height:20px"><i></i></div>
<div class="t" style="left:7px;top:254.55px;font-size:11px;letter-spacing:-0.188px;"><u>A</u>nweisungen</div>
<div class="in" style="left:8px;top:269px;width:748px;height:132px"><i></i><div class="a" style="left:1px;bottom:1px;width:744px;height:16px;background:#f0f0f0"><div class="a" style="left:17px;top:0;width:121px;height:15px;background:#cdcdcd"></div><svg class="a" style="left:4px;top:3px" width="8" height="9"><path d="M6.500 1L2.500 4.500 6.500 8" fill="none" stroke="#505050" stroke-width="2.200"/></svg><svg class="a" style="right:4px;top:3px" width="8" height="9"><path d="M1.500 1l4 3.500L1.500 8" fill="none" stroke="#505050" stroke-width="2.200"/></svg></div></div>
<div class="t" style="left:7px;top:410.55px;font-size:11px;letter-spacing:0.067px;">Date<u>n</u>herkunft</div>
<div class="in" style="left:8px;top:425px;width:484px;height:192px"><i></i><div class="a" style="left:1px;bottom:1px;width:480px;height:16px;background:#f0f0f0"><div class="a" style="left:17px;top:0;width:49px;height:15px;background:#cdcdcd"></div><svg class="a" style="left:4px;top:3px" width="8" height="9"><path d="M6.500 1L2.500 4.500 6.500 8" fill="none" stroke="#505050" stroke-width="2.200"/></svg><svg class="a" style="right:4px;top:3px" width="8" height="9"><path d="M1.500 1l4 3.500L1.500 8" fill="none" stroke="#505050" stroke-width="2.200"/></svg></div></div>
<div class="t" style="left:500px;top:410.55px;font-size:11px;letter-spacing:-0.120px;"><u>F</u>ormatierung</div>
<div class="in" style="left:500px;top:425px;width:256px;height:47px"><i></i></div>
<div class="a" style="left:500px;top:487px;width:255px;height:97px;border:1px solid #a0a0a0;box-shadow:1px 1px 0 #fff, inset 1px 1px 0 #fff;"></div>
<div class="a" style="left:506px;top:482px;width:49px;height:13px;background:#f0f0f0;"></div>
<div class="t" style="left:508px;top:482.55px;font-size:11px;letter-spacing:-0.082px;">Optionen</div>
<div class="cb" style="left:512px;top:502px"><i></i></div>
<div class="t" style="left:529px;top:503.55px;font-size:11px;letter-spacing:-0.599px;">Ra<u>h</u>men</div>
<div class="cb" style="left:512px;top:522px"><i></i></div>
<div class="t" style="left:529px;top:523.55px;font-size:11px;letter-spacing:-0.189px;">N<u>u</u>llwert zulassen</div>
<div class="cb" style="left:512px;top:542px;background:#f0f0f0"><i></i></div>
<div class="t" style="left:529px;top:543.55px;font-size:11px;color:#a0a0a0;text-shadow:1px 1px 0 #fff;letter-spacing:0.021px;">Werteliste s<u>o</u>rtieren</div>
<div class="cb" style="left:512px;top:562px;background:#f0f0f0"><i></i></div>
<div class="t" style="left:529px;top:563.55px;font-size:11px;color:#a0a0a0;text-shadow:1px 1px 0 #fff;letter-spacing:-0.132px;">Re<u>c</u>htschreibkontrolle</div>
<div class="a" style="left:529px;top:501px;width:41px;height:16px;border:1px dotted #000;"></div>
<div class="a" style="left:500px;top:593px;width:124px;height:24px;background:#f0f0f0;border:1px solid #000;"><div class="a" style="left:0;top:0;width:122px;height:22px;border:1px solid #fff;border-right-color:#696969;border-bottom-color:#696969"><div class="a" style="left:0;top:0;width:120px;height:20px;border:1px solid #f0f0f0;border-right-color:#a0a0a0;border-bottom-color:#a0a0a0"></div></div></div>
<div class="a" style="left:632px;top:594px;width:124px;height:23px;background:#f0f0f0;border:1px solid #fff;border-right-color:#696969;border-bottom-color:#696969;"><div class="a" style="left:0;top:0;width:122px;height:21px;border:1px solid #f0f0f0;border-right-color:#a0a0a0;border-bottom-color:#a0a0a0"></div></div>
<div class="t" style="left:554px;top:599.55px;font-size:11px;letter-spacing:-0.703px;">OK</div>
<div class="t" style="left:667px;top:599.55px;font-size:11px;letter-spacing:-0.024px;">Abbrechen</div>
</div>

<div class="a" style="left:22px;top:342px;width:118px;height:19px;background:#ffffe1;border:1px solid #646464;"></div>
<div class="t" style="left:26px;top:346.05px;font-size:12px;letter-spacing:-0.010px;">Textfeld (Strg+Alt+X)</div>
<svg class="a" style="left:22px;top:310px;" width="13" height="21" viewBox="0 0 13 21"><path d="M.5 .5v16l3.700-3.600 2.600 6.100 2.400-1-2.700-6h5z" fill="#fff" stroke="#000" stroke-width="1" stroke-linejoin="miter"/></svg>
<svg class="a" style="left:993px;top:705px;" width="13" height="21" viewBox="0 0 13 21"><path d="M.5 .5v16l3.700-3.600 2.600 6.100 2.400-1-2.700-6h5z" fill="#fff" stroke="#000" stroke-width="1" stroke-linejoin="miter"/></svg>
<svg class="a" style="left:264px;top:251px;" width="21" height="19.5" viewBox="0 0 19 18"><path d="M1.500 1.500h5.500l-1.800 1.800 8.300 7.700 1.800-1.800v6.300h-6.300l1.800-1.800-8.300-7.700-1.500 1.500z" fill="#fff" stroke="#000" stroke-width="1.100" stroke-linejoin="miter"/></svg>
</body>
</html>
